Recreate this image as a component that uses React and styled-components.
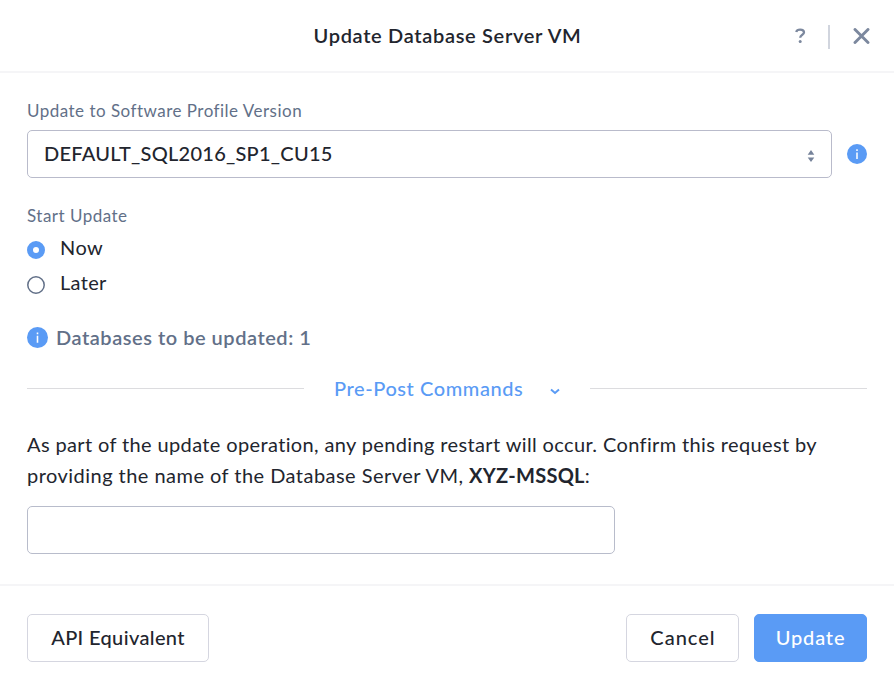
import React from "react";
import styled, { createGlobalStyle } from "styled-components";

const blue = "#5a9bf5";
const ink = "#22252e";
const slate = "#627088";

const GlobalStyle = createGlobalStyle`
  *, *::before, *::after { box-sizing: border-box; }
  body { margin: 0; background: #fff; }
`;

const Dialog = styled.div`
  display: flex;
  flex-direction: column;
  width: 894px;
  height: 689px;
  background: #fff;
  color: ${ink};
  font: 400 20px/24px Lato, "Open Sans", sans-serif;
`;

const Header = styled.header`
  display: grid;
  grid-template-columns: 1fr auto 1fr;
  align-items: center;
  height: 73px;
  padding: 0 24px 0 25px;
  border-bottom: 2px solid #f5f5f7;
`;

const Title = styled.h1`
  grid-column: 2;
  margin: 0 0 2px;
  font-size: 20px;
  line-height: 24px;
  font-weight: 600;
  letter-spacing: 0.68px;
`;

const HeaderActions = styled.div`
  display: flex;
  justify-content: flex-end;
  align-items: center;
  color: #7c889e;
`;

const IconButton = styled.button`
  display: flex;
  padding: 0;
  border: 0;
  background: none;
  color: inherit;
`;

const Separator = styled.span`
  width: 2px;
  height: 24px;
  margin: 2px 23px 0 22px;
  background: #d1d5de;
`;

const Body = styled.main`
  display: flex;
  flex-direction: column;
  flex: 1;
  padding: 27px 27px 0;
`;

const FieldLabel = styled.div`
  height: 20px;
  margin-top: ${(p) => p.$top || 0}px;
  font-size: 17px;
  line-height: 22px;
  letter-spacing: 0.485px;
  color: ${slate};
`;

const SelectRow = styled.div`
  display: flex;
  align-items: center;
  gap: 15px;
  margin-top: 10px;
`;

const Select = styled.div`
  display: flex;
  align-items: center;
  justify-content: space-between;
  width: 805px;
  height: 48px;
  padding: 0 16px 2px;
  border: 1px solid #b9bbcb;
  border-radius: 5px;
  font-weight: 500;
  letter-spacing: 0.26px;
`;

const SelectArrows = styled.svg`
  margin-top: 6px;
`;

const RadioGroup = styled.div`
  display: flex;
  flex-direction: column;
  gap: 11px;
  margin: 10px 0 0;
`;

const Radio = styled.label`
  display: flex;
  align-items: center;
  gap: 15px;
  height: 24px;
  letter-spacing: ${(p) => p.$spacing}px;
`;

const RadioDrawing = styled.svg`
  flex: none;
  margin-top: 6px;
`;

const Notice = styled.div`
  display: flex;
  align-items: center;
  gap: 8px;
  height: 24px;
  margin-top: 31px;
  color: ${slate};
  font-weight: 600;
  letter-spacing: 0.53px;
`;

const Divider = styled.div`
  display: flex;
  align-items: center;
  height: 24px;
  margin-top: 27px;
  &::before, &::after {
    content: "";
    flex: none;
    width: 277px;
    height: 1px;
    background: #dcdcdf;
  }
`;

const Expander = styled.button`
  display: flex;
  flex: 1;
  align-items: center;
  gap: 27px;
  padding: 0 0 0 30px;
  border: 0;
  background: none;
  color: ${blue};
  font: 500 20px/24px Lato, "Open Sans", sans-serif;
  letter-spacing: 0.58px;
  white-space: nowrap;
`;

const Chevron = styled.svg`
  margin-top: 7px;
`;

const Message = styled.p`
  margin: 29px 0 0;
  line-height: 31px;
  letter-spacing: 0.37px;
`;

const SecondLine = styled.span`
  display: block;
  letter-spacing: 0.465px;
`;

const Strong = styled.b`
  letter-spacing: 0.265px;
`;

const NameInput = styled.input`
  width: 588px;
  height: 48px;
  margin-top: 15px;
  border: 1px solid #b8bccb;
  border-radius: 5px;
  background: #fff;
`;

const Footer = styled.footer`
  display: flex;
  gap: 15px;
  height: 105px;
  padding: 28px 27px 0;
  border-top: 2px solid #f5f5f7;
`;

const Button = styled.button`
  width: ${(p) => p.$width}px;
  height: 48px;
  margin-right: ${(p) => (p.$lead ? "auto" : "0")};
  padding: 0 0 2px;
  border: 1px solid ${(p) => (p.$primary ? blue : "#d5d6e0")};
  border-radius: 5px;
  background: ${(p) => (p.$primary ? blue : "#fff")};
  color: ${(p) => (p.$primary ? "#fff" : ink)};
  font: 500 20px/24px Lato, "Open Sans", sans-serif;
  letter-spacing: ${(p) => p.$spacing}px;
  text-indent: ${(p) => p.$indent || 0}px;
`;

function InfoIcon({ size }) {
  return (
    <svg width={size} height={size} viewBox="0 0 20 20" aria-hidden="true">
      <circle cx="10" cy="10" r="10" fill={blue} />
      <path d="M10 8.4V15M10 5.3V6.9" stroke="#fff" strokeWidth="1.5" />
    </svg>
  );
}

function RadioMark({ checked }) {
  return (
    <RadioDrawing width="18" height="18" viewBox="0 0 18 18" fill="none">
      {checked ? (
        <circle cx="9" cy="9" r="6" stroke={blue} strokeWidth="6" />
      ) : (
        <circle cx="9" cy="9" r="8.2" stroke={slate} strokeWidth="1.5" />
      )}
    </RadioDrawing>
  );
}

export default function App() {
  return (
    <>
      <GlobalStyle />
      <Dialog>
        <Header>
          <Title>Update Database Server VM</Title>
          <HeaderActions>
            <IconButton aria-label="Help">
              <svg width="11" height="16" viewBox="0 0 11 16" fill="none">
                <path d="M1.2 4C1.7 2.4 3.2 1.7 5.1 1.7C7.5 1.7 9 2.8 9 4.6C9 6.8 5.2 6.8 5.2 9.8" stroke="currentColor" strokeWidth="2.3" />
                <circle cx="5.2" cy="13.4" r="1.5" fill="currentColor" />
              </svg>
            </IconButton>
            <Separator />
            <IconButton aria-label="Close">
              <svg width="17" height="16" viewBox="0 0 17 16" fill="none">
                <path d="M2 1.5L15 14.5M15 1.5L2 14.5" stroke="currentColor" strokeWidth="2.9" strokeLinecap="round" />
              </svg>
            </IconButton>
          </HeaderActions>
        </Header>
        <Body>
          <FieldLabel>Update to Software Profile Version</FieldLabel>
          <SelectRow>
            <Select>
              DEFAULT_SQL2016_SP1_CU15
              <SelectArrows width="8" height="12" viewBox="0 0 8 12" fill="#76839a">
                <path d="M4 0L7.3 4.7H0.7ZM4 12L0.7 7.6H7.3Z" />
              </SelectArrows>
            </Select>
            <InfoIcon size={20} />
          </SelectRow>
          <FieldLabel $top={27}>Start Update</FieldLabel>
          <RadioGroup>
            <Radio $spacing={0.425}><RadioMark checked />Now</Radio>
            <Radio $spacing={0.31}><RadioMark />Later</Radio>
          </RadioGroup>
          <Notice><InfoIcon size={21} />Databases to be updated: 1</Notice>
          <Divider>
            <Expander>
              Pre-Post Commands
              <Chevron width="10" height="7" viewBox="0 0 10 7" fill="none">
                <path d="M1 1.5L5 5L9 1.5" stroke="currentColor" strokeWidth="2" />
              </Chevron>
            </Expander>
          </Divider>
          <Message>
            As part of the update operation, any pending restart will occur. Confirm this request by
            <SecondLine>providing the name of the Database Server VM, <Strong>XYZ-MSSQL</Strong>:</SecondLine>
          </Message>
          <NameInput aria-label="Database Server VM name" />
        </Body>
        <Footer>
          <Button $width={182} $lead $spacing={0.36}>API Equivalent</Button>
          <Button $width={113} $spacing={1} $indent={1}>Cancel</Button>
          <Button $width={113} $primary $spacing={0.85}>Update</Button>
        </Footer>
      </Dialog>
    </>
  );
}
